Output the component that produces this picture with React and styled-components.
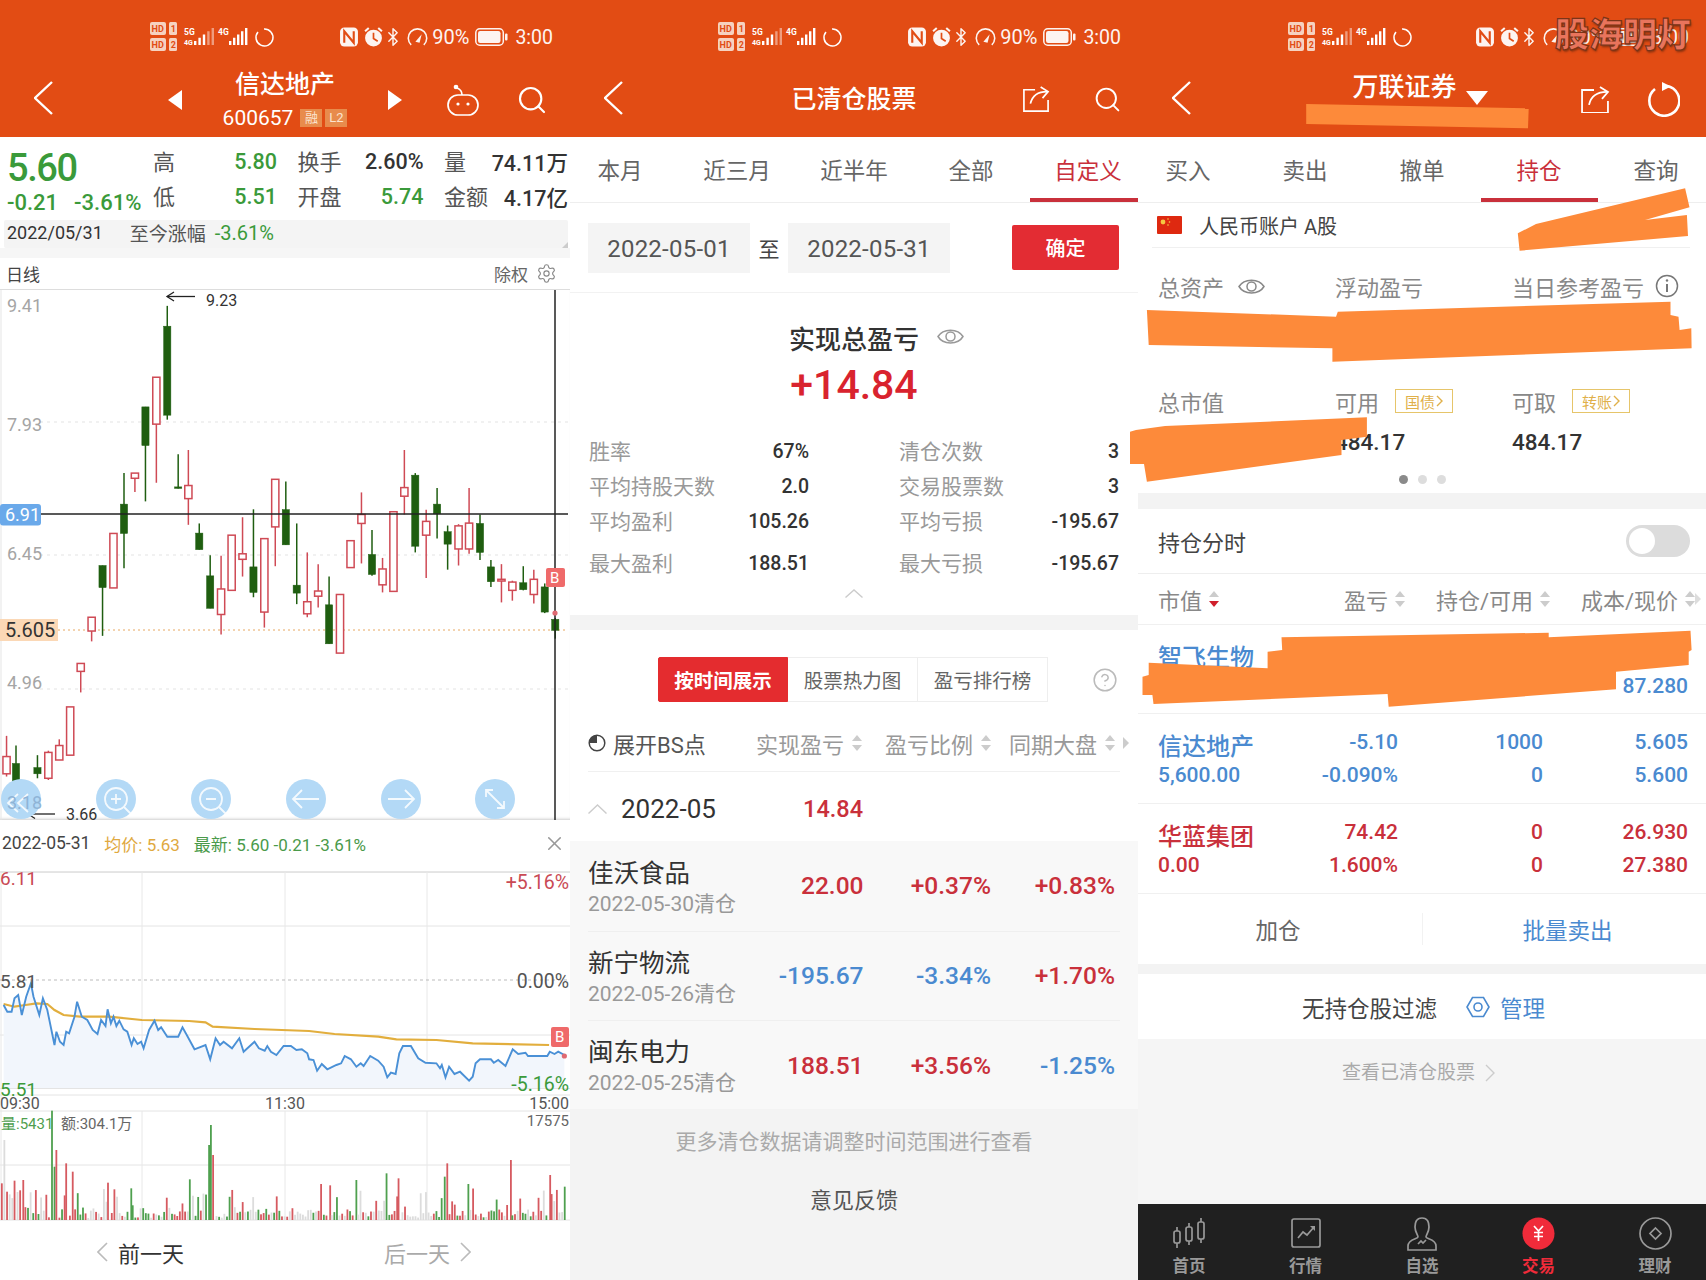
import React from 'react';
import styled, { createGlobalStyle } from 'styled-components';
import { Search, Settings, Bluetooth, CircleHelp, X } from 'lucide-react';

const ORANGE = '#e24c14';
const RED = '#c9303b';
const BLUE = '#4a8ad0';
const GREEN = '#3a9a3a';
const SCRIBBLE = '#fd8a3a';

const Global = createGlobalStyle`
  html, body { margin: 0; padding: 0; background: #fff; }
  * { box-sizing: border-box; }
  body { font-family: Roboto, "Noto Sans CJK SC", sans-serif; color: #333; }
`;

const Page = styled.div`
  display: grid;
  grid-template-columns: 570px 568px 568px;
  width: 1706px;
  height: 1280px;
  overflow: hidden;
`;
const Panel = styled.section`
  position: relative;
  display: flex;
  flex-direction: column;
  height: 1280px;
  background: ${p => p.$bg || '#fff'};
`;
const Header = styled.header`
  height: 137px;
  flex: none;
  background: ${ORANGE};
  color: #fff;
  display: flex;
  flex-direction: column;
`;
const Status = styled.div`
  height: 66px;
  padding: 21px 17px 0 ${p => p.$left}px;
  display: flex;
  justify-content: space-between;
  align-items: flex-start;
`;
const StatusRight = styled.div`
  display: flex;
  align-items: center;
  height: 32px;
  gap: 6px;
  font-size: 20px;
  opacity: .94;
`;
const BtIcon = styled(Bluetooth)`
  margin: 0 -1.5px 0 -6.5px;
`;
const GaugeSvg = styled.svg`
  margin-right: -2px;
`;
const Time = styled.span`
  margin-left: 1px;
  font-size: 19.5px;
`;
const Nav = styled.div`
  flex: 1;
  display: grid;
  grid-template-columns: 1fr auto 1fr;
  align-items: center;
  padding-bottom: 4px;
`;
const NavLeft = styled.div`
  display: flex;
  padding-left: 34px;
  margin-top: -3px;
`;
const NavRight = styled.div`
  display: flex;
  justify-content: flex-end;
  align-items: center;
  gap: ${p => p.$gap}px;
  padding-right: ${p => p.$pad}px;
`;
const TitleBlock = styled.div`
  display: flex;
  align-items: center;
  gap: 41px;
`;
const TitleStack = styled.div`
  display: flex;
  flex-direction: column;
  align-items: center;
  padding-bottom: ${p => p.$pb || 0}px;
  padding-right: ${p => p.$pr || 0}px;
`;
const Title = styled.div`
  font-size: 25px;
  line-height: 34px;
  font-weight: 500;
  white-space: nowrap;
`;
const TradeTitle = styled(Title)`
  font-size: 26px;
`;
const CodeLine = styled.div`
  display: flex;
  align-items: center;
  gap: 3px;
  margin-top: 2px;
  font-size: 21px;
  line-height: 28px;
`;
const Badge = styled.span`
  width: 22px;
  height: 18px;
  margin-left: ${p => p.$ml || 0}px;
  background: #e88b4c;
  color: #fbe3cf;
  font-size: 13px;
  line-height: 18px;
  text-align: center;
`;
const TitleCaret = styled.span`
  display: block;
  margin: 22px 0 0 9px;
  width: 0;
  height: 0;
  border-left: 11px solid transparent;
  border-right: 11px solid transparent;
  border-top: 14px solid #fff;
`;
const TitleRow = styled.div`
  display: flex;
  align-items: center;
`;

/* Panel one */
const Quote = styled.div`
  height: 83px;
  flex: none;
  display: flex;
`;
const PriceCol = styled.div`
  width: 153px;
  padding: 8px 0 0 7px;
`;
const Price = styled.div`
  font-size: 38px;
  line-height: 46px;
  font-weight: 500;
  color: ${GREEN};
  letter-spacing: -1.4px;
`;
const Changes = styled.div`
  display: flex;
  gap: 16px;
  font-size: 22px;
  line-height: 24px;
  color: ${GREEN};
  white-space: nowrap;
  font-weight: 500;
`;
const QuoteGrid = styled.div`
  display: grid;
  grid-template-columns: 124px 126px 124px;
  grid-auto-rows: 35px;
  column-gap: 20.5px;
  padding-top: 5px;
`;
const QuoteCell = styled.div`
  display: flex;
  justify-content: space-between;
  align-items: center;
  white-space: nowrap;
`;
const QuoteKey = styled.span`
  font-size: 22px;
  color: #555;
`;
const QuoteVal = styled.span`
  margin-top: 3px;
  font-size: 21.5px;
  font-weight: 500;
  color: ${p => (p.$green ? GREEN : '#333')};
`;
const DateBar = styled.div`
  position: relative;
  height: 28px;
  flex: none;
  margin: 0 2px 0 4px;
  background: #f4f4f4;
  display: flex;
  align-items: center;
  padding: 0 0 3px 3px;
  font-size: 18px;
  color: #333;
  white-space: nowrap;
  border-radius: 2px;
  &::after {
    content: '';
    position: absolute;
    right: 0;
    bottom: 0;
    border-left: 6px solid transparent;
    border-bottom: 6px solid #ccc;
  }
`;
const DateKey = styled.span`
  margin-left: 27px;
  font-size: 19px;
  color: #555;
`;
const DateGreen = styled.span`
  margin-left: 9px;
  font-size: 20px;
  color: ${GREEN};
`;
const ChartHead = styled.div`
  height: 32px;
  flex: none;
  border-bottom: 1px solid #ddd;
  display: flex;
  align-items: center;
  justify-content: space-between;
  padding: 0 13px 0 6px;
  font-size: 17px;
  color: #444;
`;
const ChartHeadRight = styled.div`
  display: flex;
  align-items: center;
  gap: 8px;
  color: #666;
`;
const ChartSvg = styled.svg`
  display: block;
  flex: none;
  overflow: visible;
`;
const KlineWrap = styled.div`
  flex: none;
  height: 530px;
  box-shadow: inset 0 -3px 3px -2px #ccc;
`;
const DetailHead = styled.div`
  position: relative;
  height: 52px;
  flex: none;
  display: flex;
  align-items: center;
  padding: 0 4px 5px 2px;
  font-size: 17px;
  white-space: nowrap;
  background: #fff;
  border-bottom: 1px solid #e6e6e6;
`;
const DetailDate = styled.span`
  font-size: 17.5px;
  color: #444;
`;
const DetailAvg = styled.span`
  margin-left: 14px;
  color: #e0a93f;
`;
const DetailNew = styled.span`
  margin-left: 14px;
  color: #4a9a4a;
`;
const DetailClose = styled.span`
  margin-left: auto;
  display: flex;
  color: #999;
`;
const DayFooter = styled.div`
  flex: 1;
  display: flex;
  align-items: center;
  padding: 2px 0 0 97px;
  font-size: 22px;
  color: #333;
`;
const DayLink = styled.span`
  display: flex;
  align-items: center;
  gap: 10px;
  color: ${p => (p.$muted ? '#aaa' : '#333')};
  margin-left: ${p => p.$ml || 0}px;
`;

const AxisText = styled.text`
  font-family: Roboto, sans-serif;
  font-size: ${p => p.$size || 18}px;
  fill: ${p => p.$fill || '#a5a5a5'};
  font-weight: ${p => p.$weight || 400};
`;
const CjkText = styled.text`
  font-family: Roboto, "Noto Sans CJK SC", sans-serif;
  font-size: 15px;
  fill: ${p => p.$fill || '#777'};
`;

/* Tabs */
const Tabs = styled.div`
  height: 66px;
  flex: none;
  display: grid;
  grid-template-columns: repeat(5, 117px);
  justify-content: center;
  overflow: hidden;
  border-bottom: 1px solid #eee;
`;
const Tab = styled.div`
  display: flex;
  align-items: center;
  justify-content: center;
  font-size: 22.5px;
  padding-top: 2px;
  color: ${p => (p.$on ? RED : '#666')};
  border-bottom: 4px solid ${p => (p.$on ? RED : 'transparent')};
`;

/* Panel two */
const DateRow = styled.div`
  height: 90px;
  flex: none;
  display: flex;
  align-items: center;
  padding: 0 19px 0 18px;
  border-bottom: 1px solid #f2f2f2;
`;
const DateInput = styled.div`
  width: 162px;
  height: 50px;
  padding-top: 3px;
  background: #f4f4f4;
  color: #555;
  font-size: 24px;
  letter-spacing: .25px;
  display: flex;
  align-items: center;
  justify-content: center;
`;
const DateTo = styled.span`
  width: 38px;
  text-align: center;
  font-size: 21px;
  color: #444;
`;
const Confirm = styled.div`
  margin-left: auto;
  width: 107px;
  height: 45px;
  background: #e32c33;
  color: #fff;
  border-radius: 2px;
  font-size: 20px;
  font-weight: 500;
  display: flex;
  align-items: center;
  justify-content: center;
`;
const Summary = styled.div`
  height: 322px;
  flex: none;
  padding-top: 29px;
`;
const SummaryTitle = styled.div`
  position: relative;
  height: 30px;
  display: flex;
  justify-content: center;
  align-items: center;
  font-size: 26px;
  font-weight: 500;
  color: #333;
`;
const EyeSlot = styled.span`
  position: absolute;
  left: 367px;
  top: 5px;
  display: flex;
`;
const BigNumber = styled.div`
  height: 64px;
  line-height: 66px;
  text-align: center;
  font-size: 41px;
  font-weight: 500;
  color: #d9232e;
`;
const Stats = styled.div`
  margin-top: 16px;
  display: grid;
  grid-template-columns: 220px 220px;
  grid-template-rows: 35px 35px 35px 49px;
  column-gap: 90px;
  padding-left: 19px;
`;
const Stat = styled.div`
  display: flex;
  justify-content: space-between;
  align-items: center;
`;
const StatKey = styled.span`
  font-size: 21px;
  color: #999;
`;
const StatVal = styled.span`
  margin-top: 3px;
  font-size: 19.5px;
  font-weight: 500;
  color: #333;
`;
const CollapseRow = styled.div`
  display: flex;
  justify-content: center;
  padding-top: 3px;
`;
const Band = styled.div`
  height: ${p => p.$h}px;
  flex: none;
  background: ${p => p.$color || '#f3f3f3'};
`;
const SegRow = styled.div`
  flex: none;
  display: flex;
  align-items: center;
  height: 45px;
  margin-top: 27px;
  padding-left: 88px;
`;
const Seg = styled.div`
  width: 130px;
  height: 45px;
  display: flex;
  align-items: center;
  justify-content: center;
  font-size: 19.5px;
  background: ${p => (p.$on ? '#e42c2f' : '#fff')};
  color: ${p => (p.$on ? '#fff' : '#666')};
  font-weight: ${p => (p.$on ? 700 : 400)};
  border: 1px solid ${p => (p.$on ? '#e42c2f' : '#eee')};
  border-left-width: ${p => (p.$on ? 1 : 0)}px;
  border-radius: ${p => (p.$on ? '2px 0 0 2px' : 0)};
`;
const HelpSlot = styled.span`
  margin-left: 44px;
  display: flex;
  color: #bbb;
`;
const ClearHead = styled.div`
  height: 54px;
  margin: 16px 18px 0;
  padding-bottom: 4px;
  flex: none;
  display: grid;
  grid-template-columns: 158px 116px 129px 124px;
  align-items: center;
  border-bottom: 1px solid #f0f0f0;
  white-space: nowrap;
`;
const BSLabel = styled.div`
  display: flex;
  align-items: center;
  gap: 7px;
  font-size: 22px;
  color: #555;
`;
const HeadCell = styled.div`
  display: flex;
  justify-content: flex-end;
  align-items: center;
  gap: 8px;
  font-size: 22px;
  color: #999;
`;
const MoreArrow = styled.span`
  width: 0;
  height: 0;
  margin: 0 -14px 0 0;
  border-top: 6px solid transparent;
  border-bottom: 6px solid transparent;
  border-left: 6px solid #ccc;
`;
const HoldArrow = styled(MoreArrow)`
  margin: 0 -13px 0 0;
  border-left-color: #ddd;
`;
const MonthRow = styled.div`
  height: 69px;
  flex: none;
  margin: 0 18px;
  padding-top: 4px;
  display: grid;
  grid-template-columns: 159px 116px;
  align-items: center;
`;
const MonthLabel = styled.div`
  display: flex;
  align-items: center;
  gap: 14px;
  font-size: 26px;
  color: #333;
`;
const MonthVal = styled.div`
  text-align: right;
  font-size: 23.5px;
  font-weight: 500;
  color: ${RED};
`;
const ClearList = styled.div`
  flex: none;
  height: 268px;
  background: #f8f8f8;
  padding: 0 18px;
`;
const ClearRow = styled.div`
  height: 89.5px;
  display: grid;
  grid-template-columns: 159.5px 116px 127.5px 124px;
  align-items: center;
  border-top: ${p => (p.$first ? 'none' : '1px solid #efefef')};
  white-space: nowrap;
`;
const ClearName = styled.div`
  margin-top: 2px;
  font-size: 25.5px;
  line-height: 34px;
  color: #333;
`;
const ClearDate = styled.div`
  font-size: 21px;
  line-height: 28px;
  color: #999;
`;
const ClearVal = styled.div`
  text-align: right;
  font-size: 24.5px;
  font-weight: 500;
  color: ${p => (p.$down ? BLUE : RED)};
`;
const ClearFoot = styled.div`
  flex: 1;
  background: #f3f3f3;
  padding-top: 18px;
  text-align: center;
`;
const Hint = styled.div`
  font-size: 21px;
  line-height: 30px;
  color: #aaa;
`;
const Feedback = styled.div`
  margin-top: 29px;
  font-size: 22px;
  line-height: 30px;
  color: #555;
`;

/* Panel three */
const Account = styled.div`
  height: 45px;
  margin: 0 16px 0 14px;
  flex: none;
  display: flex;
  align-items: center;
  gap: 17px;
  padding-left: 5px;
  border-bottom: 1px solid #f0f0f0;
  font-size: 20px;
  color: #444;
`;
const Metrics = styled.div`
  height: 245px;
  flex: none;
  padding: 23px 0 0 20px;
  display: grid;
  grid-template-columns: repeat(3, 177px);
  grid-template-rows: 30px 85px 30px 52px;
`;
const MetricKey = styled.div`
  display: flex;
  align-items: center;
  font-size: 22px;
  color: #888;
  white-space: nowrap;
  gap: ${p => p.$gap || 14}px;
`;
const MetricVal = styled.div`
  font-size: 22.5px;
  font-weight: 500;
  color: #333;
  display: flex;
  align-items: center;
`;
const MiniTag = styled.span`
  width: 58px;
  height: 24px;
  margin-left: 2px;
  border: 1px solid #e6c56a;
  color: #e0b04a;
  font-size: 15px;
  display: flex;
  align-items: center;
  justify-content: center;
  gap: 1px;
`;
const Dots = styled.div`
  position: absolute;
  left: 261px;
  top: 475px;
  display: flex;
  gap: 10px;
`;
const Dot = styled.span`
  width: 9px;
  height: 9px;
  border-radius: 50%;
  background: ${p => (p.$on ? '#8a8a8a' : '#ddd')};
`;
const ToggleRow = styled.div`
  height: 65px;
  flex: none;
  display: flex;
  align-items: center;
  justify-content: space-between;
  padding: 0 16px 0 20px;
  font-size: 22px;
  color: #444;
  border-bottom: 1px solid #eee;
`;
const ToggleTrack = styled.span`
  display: block;
  width: 64px;
  height: 32px;
  border-radius: 16px;
  background: #dcdcdc;
  padding: 3px;
`;
const ToggleKnob = styled.span`
  display: block;
  width: 26px;
  height: 26px;
  border-radius: 50%;
  background: #fff;
`;
const HoldGrid = styled.div`
  display: grid;
  grid-template-columns: 110px 130px 145px 145px;
  padding-left: 20px;
  height: ${p => p.$h}px;
  flex: none;
  border-bottom: 1px solid #f0f0f0;
`;
const HoldHead = styled.div`
  display: flex;
  align-items: center;
  justify-content: ${p => (p.$left ? 'flex-start' : 'flex-end')};
  gap: 7px;
  white-space: nowrap;
  font-size: 22px;
  color: #888;
  > svg { margin-right: ${p => (p.$left ? 0 : -7)}px; }
`;
const HoldCell = styled.div`
  padding-top: 12px;
  text-align: ${p => (p.$left ? 'left' : 'right')};
  color: ${p => (p.$red ? RED : BLUE)};
  white-space: nowrap;
`;
const HoldName = styled.div`
  margin-top: 5px;
  font-size: 24px;
  line-height: 33px;
  font-weight: 500;
`;
const HoldLine = styled.div`
  font-size: 21px;
  font-weight: 500;
  line-height: ${p => p.$lh || 33}px;
  height: ${p => p.$lh || 33}px;
`;
const Actions = styled.div`
  height: 70px;
  flex: none;
  display: grid;
  grid-template-columns: 284px 284px;
  align-items: center;
`;
const Action = styled.div`
  text-align: center;
  font-size: 22.5px;
  color: ${p => (p.$blue ? BLUE : '#666')};
  border-left: ${p => (p.$blue ? '1px solid #f2f2f2' : 'none')};
  margin-left: ${p => (p.$blue ? 0 : -4)}px;
  padding-left: ${p => (p.$blue ? 6 : 0)}px;
`;
const FilterRow = styled.div`
  height: 65px;
  flex: none;
  display: flex;
  align-items: center;
  padding-left: 164px;
  font-size: 22.5px;
  color: #444;
`;
const ManageLink = styled.span`
  margin-left: 29px;
  display: flex;
  align-items: center;
  gap: 10px;
  color: ${BLUE};
`;
const ClosedLink = styled.div`
  flex: 1;
  background: #f5f5f5;
  display: flex;
  align-items: flex-start;
  padding: 20px 0 0 204px;
  gap: 10px;
  font-size: 19px;
  line-height: 28px;
  color: #aaa;
`;
const ChevSlot = styled.span`
  display: flex;
  align-items: center;
  height: 28px;
`;
const BottomNav = styled.nav`
  height: 76px;
  flex: none;
  background: #202020;
  display: grid;
  grid-template-columns: repeat(5, 116.5px);
  justify-content: center;
`;
const NavItem = styled.div`
  display: flex;
  flex-direction: column;
  align-items: center;
  padding-top: 13px;
  font-size: 16.5px;
  line-height: 24px;
  font-weight: 700;
  color: ${p => (p.$on ? '#f02b3a' : '#999')};
`;
const NavIcon = styled.span`
  display: flex;
  height: 36px;
  margin-bottom: 2px;
`;
const Watermark = styled.div`
  position: absolute;
  left: 417px;
  top: 14px;
  font-size: 34px;
  line-height: 42px;
  font-weight: 900;
  white-space: nowrap;
  color: #e9745c;
  -webkit-text-stroke: 1.2px #7a3418;
  text-shadow: 1px 2px 2px rgba(70, 30, 10, .5);
`;
const ScribbleLayer = styled.svg`
  position: absolute;
  left: -8px;
  top: 0;
  pointer-events: none;
`;

/* Drawn icons */
const Chevron = ({ dir = 'left', size = 34, w = 19, color = '#fff', sw = 2.4 }) => {
  const pts = { left: `${w - 1},1 1,${size / 2} ${w - 1},${size - 1}`, right: `1,1 ${w - 1},${size / 2} 1,${size - 1}` };
  return (
    <svg width={w} height={size} viewBox={`0 0 ${w} ${size}`}>
      <polyline points={pts[dir]} fill="none" stroke={color} strokeWidth={sw} />
    </svg>
  );
};
const ChevronUp = ({ w = 18, h = 9, color = '#ccc' }) => (
  <svg width={w} height={h} viewBox={`0 0 ${w} ${h}`}>
    <polyline points={`0.5,${h - 0.5} ${w / 2},1 ${w - 0.5},${h - 0.5}`} fill="none" stroke={color} strokeWidth="1.4" />
  </svg>
);
const Tri = ({ dir }) => (
  <svg width="14" height="20" viewBox="0 0 14 20">
    <polygon points={dir === 'left' ? '14,0 14,20 0,10' : '0,0 0,20 14,10'} fill="#fff" />
  </svg>
);
const Robot = () => (
  <svg width="32" height="32" viewBox="0 0 32 32" fill="none" stroke="#fff" strokeWidth="1.7">
    <rect x="1" y="11" width="30" height="20" rx="10" />
    <path d="M15 11 C15 7 13 5 10 4" />
    <circle cx="9" cy="3" r="1.5" fill="#fff" />
    <circle cx="11" cy="20" r="1.6" fill="#fff" stroke="none" />
    <circle cx="21" cy="20" r="1.6" fill="#fff" stroke="none" />
  </svg>
);
const Share = ({ w = 30 }) => (
  <svg width={w} height={w * 0.93} viewBox="0 0 30 28" fill="none" stroke="#fff" strokeWidth="1.8">
    <path d="M14 4 H2 V27 H28 V15" />
    <path d="M9 19 C11 10 18 6 27 6" />
    <polyline points="20,1 28,6 22,13" />
  </svg>
);
const Refresh = () => (
  <svg width="33" height="35" viewBox="0 0 33 35" fill="none" stroke="#fff" strokeWidth="2.6">
    <path d="M20 4 A 15 15 0 1 1 8 7" />
    <polygon points="15,0 24,4.5 15,9" fill="#fff" stroke="none" />
  </svg>
);
const Eye = ({ color = '#999' }) => (
  <svg width="27" height="19" viewBox="0 0 27 19" fill="none" stroke={color} strokeWidth="1.5">
    <path d="M1 9.5 C6 1 21 1 26 9.5 C21 18 6 18 1 9.5 Z" />
    <circle cx="13.5" cy="9.5" r="4.5" />
  </svg>
);
const InfoIcon = () => (
  <svg width="24" height="24" viewBox="0 0 24 24" fill="none" stroke="#777" strokeWidth="1.5">
    <circle cx="12" cy="12" r="10.5" />
    <line x1="12" y1="10" x2="12" y2="18" strokeWidth="2" />
    <circle cx="12" cy="6.5" r="1.2" fill="#777" stroke="none" />
  </svg>
);
const Pie = () => (
  <svg width="18" height="18" viewBox="0 0 18 18">
    <circle cx="9" cy="9" r="7.8" fill="none" stroke="#444" strokeWidth="1.5" />
    <path d="M9 9 V1.2 A7.8 7.8 0 0 0 1.2 9 Z" fill="#444" />
  </svg>
);
const Sort = ({ active }) => (
  <svg width="10" height="18" viewBox="0 0 10 18">
    <polygon points="5,1 10,7 0,7" fill="#ccc" />
    <polygon points="5,17 10,11 0,11" fill={active ? '#d0202c' : '#ccc'} />
  </svg>
);
const Flag = () => (
  <svg width="25" height="18" viewBox="0 0 25 18">
    <rect width="25" height="18" rx="1" fill="#de2910" />
    <circle cx="6" cy="6" r="2.4" fill="#f5c842" />
    <circle cx="11" cy="3" r=".8" fill="#f5c842" />
    <circle cx="12.5" cy="6" r=".8" fill="#f5c842" />
    <circle cx="11" cy="9" r=".8" fill="#f5c842" />
  </svg>
);
const Hex = () => (
  <svg width="24" height="24" viewBox="0 0 24 24" fill="none" stroke={BLUE} strokeWidth="1.6">
    <polygon points="6.5,2.5 17.5,2.5 23,12 17.5,21.5 6.5,21.5 1,12" />
    <circle cx="12" cy="12" r="4" />
  </svg>
);
const Signals = () => {
  const bars = (x0, n, step, fade) =>
    Array.from({ length: n }, (_, i) => {
      const h = 4 + i * (13 / (n - 1));
      return <rect key={i} x={x0 + i * step} y={24 - h} width="2.4" height={h} fill="#fff" opacity={fade && i > n - 3 ? 0.45 : 1} />;
    });
  return (
    <svg width="125" height="34" viewBox="0 0 125 34">
      {[1, 17].map((y, i) => (
        <g key={y}>
          <rect x="0" y={y} width="16" height="13" rx="2" fill="#f6d2c0" />
          <AxisText x="1.6" y={y + 10} $size={9} $weight={700} $fill={ORANGE}>HD</AxisText>
          <rect x="19" y={y} width="8" height="13" rx="1.5" fill="#f6d2c0" />
          <AxisText x="20.7" y={y + 10} $size={9} $weight={700} $fill={ORANGE}>{i + 1}</AxisText>
        </g>
      ))}
      <AxisText x="34" y="14" $size={8.5} $weight={700} $fill="#fff">5G</AxisText>
      <AxisText x="34" y="24" $size={7} $weight={700} $fill="#fff">4G</AxisText>
      {bars(44, 5, 4.4, true)}
      <AxisText x="68" y="14" $size={8.5} $weight={700} $fill="#fff">4G</AxisText>
      {bars(79, 5, 4, false)}
      <path d="M114 8 A8.5 8.5 0 1 1 108 11" fill="none" stroke="#fff" strokeWidth="1.5" />
    </svg>
  );
};
const NfcIcon = () => (
  <svg width="18" height="20" viewBox="0 0 17 19">
    <rect x="0" y="0.5" width="17" height="18" rx="4" fill="#fff" />
    <path d="M4 15 V4 L13 15 V4" fill="none" stroke={ORANGE} strokeWidth="2" />
  </svg>
);
const AlarmIcon = () => (
  <svg width="19" height="20" viewBox="0 0 18 19">
    <circle cx="9" cy="10.5" r="8" fill="#fff" />
    <path d="M9 5.5 V11 L13 13.5" fill="none" stroke={ORANGE} strokeWidth="1.6" />
    <path d="M1 4 L4.5 1 M17 4 L13.5 1" stroke="#fff" strokeWidth="2" />
  </svg>
);
const GaugeIcon = () => (
  <GaugeSvg width="21" height="20" viewBox="0 0 20 19" fill="none" stroke="#fff" strokeWidth="1.5">
    <path d="M4 17 A8.8 8.8 0 1 1 16 17" />
    <path d="M8 14 L14 7 L12 15 Z" fill="#fff" stroke="none" />
  </GaugeSvg>
);
const Battery = () => (
  <svg width="33" height="18" viewBox="0 0 33 18">
    <rect x="0.8" y="0.8" width="27.5" height="16.4" rx="4" fill="none" stroke="#fff" strokeWidth="1.5" />
    <rect x="3" y="3" width="22.5" height="12" rx="2.2" fill="#fff" />
    <rect x="30" y="5.5" width="2.5" height="7" rx="1" fill="#fff" />
  </svg>
);
const StatusBar = ({ left }) => (
  <Status $left={left}>
    <Signals />
    <StatusRight>
      <NfcIcon />
      <AlarmIcon />
      <BtIcon size={20} strokeWidth={1.7} />
      <GaugeIcon />
      <span>90%</span>
      <Battery />
      <Time>3:00</Time>
    </StatusRight>
  </Status>
);

/* Day K-line chart: data read off the picture, mapped to page pixels */
const kx = z => z / 2.75;
const ky = z => 280 + z / 2.9;
const CANDLES = [
  ['r', 18, 1322, 1440, 1382, 1432], ['g', 44, 1350, 1490, 1402, 1475], ['g', 103, 1378, 1445, 1414, 1432],
  ['r', 133, 1365, 1450, 1370, 1445], ['r', 163, 1332, 1392, 1350, 1392], ['r', 193, 1238, 1378, 1238, 1378],
  ['r', 222, 1112, 1196, 1112, 1135], ['r', 252, 978, 1048, 978, 1018], ['g', 282, 828, 1032, 828, 892],
  ['r', 312, 735, 893, 735, 893], ['g', 341, 560, 836, 650, 735], ['r', 371, 560, 615, 560, 575],
  ['g', 400, 368, 642, 368, 480], ['r', 430, 282, 588, 282, 418], ['g', 460, 75, 405, 134, 392],
  ['g', 490, 505, 605, 600, 604], ['r', 518, 493, 710, 596, 634], ['g', 548, 706, 782, 734, 782],
  ['g', 578, 798, 952, 858, 952], ['r', 608, 800, 1028, 896, 970], ['r', 637, 740, 900, 740, 900],
  ['r', 667, 688, 860, 794, 810], ['g', 697, 665, 920, 832, 906], ['r', 727, 750, 1008, 750, 963],
  ['r', 757, 578, 830, 578, 716], ['g', 786, 584, 768, 666, 768], ['g', 816, 706, 940, 885, 908],
  ['r', 845, 790, 978, 933, 968], ['r', 875, 824, 950, 902, 917], ['g', 905, 860, 1055, 942, 1055],
  ['r', 935, 912, 1082, 912, 1082], ['r', 964, 756, 834, 756, 834], ['r', 994, 616, 822, 680, 706],
  ['g', 1023, 725, 858, 796, 854], ['r', 1052, 806, 906, 838, 884], ['r', 1082, 672, 903, 672, 903],
  ['r', 1112, 493, 680, 602, 627], ['g', 1142, 560, 790, 566, 772], ['r', 1172, 666, 864, 700, 740],
  ['g', 1202, 603, 750, 650, 678], ['g', 1231, 712, 840, 730, 766], ['r', 1261, 708, 828, 713, 780],
  ['r', 1290, 603, 794, 705, 780], ['g', 1320, 680, 812, 706, 790], ['g', 1350, 812, 890, 832, 875],
  ['r', 1379, 824, 935, 868, 873], ['r', 1409, 872, 930, 876, 900], ['g', 1439, 830, 900, 878, 898],
  ['r', 1468, 840, 938, 868, 912], ['g', 1498, 880, 966, 890, 963], ['g', 1527, 980, 1040, 984, 1016],
];
const KRED = '#cf4a55';
const KGREEN = '#1f5e10';
const RoundButton = ({ cx, children }) => (
  <g transform={`translate(${cx} 799)`}>
    <circle r="20" fill="#b3d9f6" />
    <g fill="none" stroke="#fff" strokeWidth="1.8" opacity=".85">{children}</g>
  </g>
);
const KlineChart = () => (
  <KlineWrap>
    <ChartSvg width="570" height="530" viewBox="0 290 570 530">
      {[422, 555, 689].map(y => (
        <line key={y} x1="40" x2="568" y1={y} y2={y} stroke="#e3e3e3" strokeDasharray="3 4" />
      ))}
      <line x1="1" x2="1" y1="290" y2="820" stroke="#e6e6e6" />
      <line x1="58" x2="568" y1="630" y2="630" stroke="#e8a860" strokeDasharray="2 3" />
      {CANDLES.map(([t, x, wt, wb, bt, bb]) => {
        const c = t === 'r' ? KRED : KGREEN;
        return (
          <g key={x}>
            <line x1={kx(x)} x2={kx(x)} y1={ky(wt)} y2={ky(wb)} stroke={c} strokeWidth="1.5" />
            <rect
              x={kx(x) - 3.6}
              y={ky(bt)}
              width="7.2"
              height={Math.max(ky(bb) - ky(bt), 1.5)}
              fill={t === 'r' ? '#fff' : c}
              stroke={c}
              strokeWidth={t === 'r' ? 1.5 : 0.5}
            />
          </g>
        );
      })}
      <line x1="38" x2="568" y1="514" y2="514" stroke="#222" strokeWidth="1.5" />
      <line x1="555" x2="555" y1="290" y2="820" stroke="#222" strokeWidth="1.5" />
      <AxisText x="7" y="312" >9.41</AxisText>
      <AxisText x="7" y="431">7.93</AxisText>
      <AxisText x="7" y="560">6.45</AxisText>
      <AxisText x="7" y="689">4.96</AxisText>
      <rect x="0" y="504" width="41" height="21.5" rx="3" fill="#6aa9ea" />
      <AxisText x="5" y="521" $fill="#fff">6.91</AxisText>
      <rect x="0" y="619" width="58" height="22" fill="#fbd8b6" />
      <AxisText x="5" y="637" $size={20} $fill="#333">5.605</AxisText>
      <g stroke="#222" strokeWidth="1.3" fill="none">
        <path d="M167 296.5 H195" />
        <path d="M174 292 L167 296.5 L174 301" />
        <path d="M28 814 H55" />
        <path d="M35 809.5 L28 814 L35 818.5" />
      </g>
      <AxisText x="206" y="306" $size={16} $fill="#333">9.23</AxisText>
      <rect x="546" y="568" width="19" height="19" rx="2" fill="#ef6a6a" />
      <AxisText x="550" y="583" $size={15} $fill="#fff">B</AxisText>
      <circle cx="555" cy="613" r="2.6" fill="#e06a72" />
      <RoundButton cx={21}>
        <path d="M13 -9 L3 0 L13 9 M3 -9 L-7 0 L3 9" transform="translate(-6 4)" />
      </RoundButton>
      <RoundButton cx={116}>
        <circle r="11" />
        <path d="M8 8 L15 15 M-5 0 H5 M0 -5 V5" />
      </RoundButton>
      <RoundButton cx={211}>
        <circle r="11" />
        <path d="M8 8 L15 15 M-5 0 H5" />
      </RoundButton>
      <RoundButton cx={306}>
        <path d="M-13 0 H13 M-4 -9 L-13 0 L-4 9" />
      </RoundButton>
      <RoundButton cx={401}>
        <path d="M-13 0 H13 M4 -9 L13 0 L4 9" />
      </RoundButton>
      <RoundButton cx={495}>
        <path d="M-9 -9 L9 9 M-9 -2 V-9 H-2 M9 2 V9 H2" />
      </RoundButton>
      <AxisText x="7" y="809" $fill="#8fb4d6">3.18</AxisText>
      <AxisText x="66" y="820" $size={16} $fill="#333">3.66</AxisText>
    </ChartSvg>
  </KlineWrap>
);

/* Intraday chart */
const ix = z => z / 2.75;
const iy = z => 820 + z / 3;
const BLUE_LINE = [[10,555],[20,575],[32,575],[40,535],[50,525],[60,585],[72,530],[85,490],[92,530],[108,585],[118,535],[130,570],[150,675],[155,635],[165,665],[175,675],[182,635],[190,640],[205,590],[212,545],[225,590],[240,600],[255,630],[268,642],[278,600],[290,618],[296,568],[305,610],[312,590],[320,618],[328,602],[340,628],[350,635],[362,675],[368,655],[378,672],[388,665],[395,685],[410,630],[425,602],[435,630],[443,622],[460,650],[490,650],[502,622],[515,648],[535,688],[565,675],[578,718],[593,655],[605,675],[615,665],[638,685],[658,655],[670,695],[700,665],[712,685],[728,692],[735,678],[745,695],[760,705],[780,678],[800,678],[815,690],[830,688],[845,700],[850,718],[862,720],[872,752],[885,732],[900,748],[925,735],[938,730],[948,708],[965,718],[980,740],[992,730],[1000,738],[1018,708],[1040,722],[1055,740],[1065,772],[1075,758],[1088,762],[1098,700],[1108,678],[1130,678],[1150,715],[1170,728],[1200,730],[1210,745],[1215,735],[1225,772],[1235,740],[1250,762],[1265,755],[1290,782],[1300,770],[1308,730],[1320,718],[1350,718],[1358,728],[1370,720],[1390,738],[1410,688],[1425,702],[1445,698],[1452,708],[1505,708],[1512,695],[1525,702],[1535,695],[1552,705]];
const AVG_LINE = [[10,552],[40,560],[70,555],[100,550],[130,552],[150,570],[175,585],[220,590],[300,590],[390,600],[520,603],[565,607],[585,620],[700,627],[850,633],[920,642],[1040,650],[1090,658],[1200,660],[1300,670],[1510,675]];
const toPts = arr => arr.map(([x, y]) => `${ix(x).toFixed(1)},${iy(y).toFixed(1)}`).join(' ');
const SPIKES = { 143: [872, 'g'], 150: [1040, 'g'], 155: [990, 'r'], 182: [1030, 'r'], 200: [1055, 'r'], 297: [1088, 'r'], 361: [1105, 'g'], 522: [1078, 'g'], 575: [975, 'g'], 580: [915, 'g'], 586: [1005, 'r'], 883: [1092, 'r'], 908: [1096, 'r'], 980: [1080, 'g'], 1063: [1060, 'g'], 1096: [1075, 'r'], 1103: [1040, 'r'], 1223: [1070, 'g'], 1230: [1030, 'r'], 1288: [1092, 'g'], 1405: [1020, 'r'], 1513: [1065, 'r'], 1553: [1100, 'g'], 12: [960, 'w'], 5: [1090, 'r'], 40: [1082, 'r'], 64: [1080, 'r'] };
const VOLUMES = (() => {
  const out = [];
  let seed = 17;
  const rnd = () => { seed = (seed * 16807) % 2147483647; return seed / 2147483647; };
  const taken = Object.keys(SPIKES).map(Number);
  for (let x = 5; x < 1556; x += 7.2) {
    const near = taken.find(t => Math.abs(t - x) < 3.6);
    if (near !== undefined) {
      out.push([near, SPIKES[near][0], SPIKES[near][1]]);
      continue;
    }
    const k = rnd();
    const t = k < 0.35 ? 'r' : k < 0.65 ? 'g' : 'w';
    const r = rnd();
    const dense = x < 230 ? 0.7 : 0.25;
    const h = r < dense ? 30 + rnd() * 65 : 6 + rnd() * 26;
    out.push([x, 1200 - h, t]);
  }
  return out;
})();
const VCOLOR = { r: '#d65a60', g: '#4fa04f', w: '#dcdcdc' };

const IntradayChart = () => (
  <ChartSvg width="570" height="350" viewBox="0 872 570 350">
    {[872.5, 926, 1035, 1088.5, 1095, 1111, 1165, 1220].map(y => (
      <line key={y} x1="0" x2="570" y1={y} y2={y} stroke="#e4e4e4" />
    ))}
    {[142, 285, 427].map(x => (
      <g key={x}>
        <line x1={x} x2={x} y1="872" y2="1088" stroke="#e8e8e8" />
        <line x1={x} x2={x} y1="1111" y2="1220" stroke="#e8e8e8" />
      </g>
    ))}
    <line x1="1" x2="1" y1="872" y2="1220" stroke="#e8e8e8" />
    <line x1="0" x2="570" y1="980" y2="980" stroke="#bbb" strokeDasharray="3 3" />
    <polygon points={`${ix(10)},1088 ${toPts(BLUE_LINE)} ${ix(1552)},1088`} fill="#f2f6fc" />
    <polyline points={toPts(AVG_LINE)} fill="none" stroke="#e2ae3d" strokeWidth="2.2" />
    <polyline points={toPts(BLUE_LINE)} fill="none" stroke="#4a90d6" strokeWidth="1.9" />
    <circle cx={ix(1552)} cy={iy(708)} r="2.6" fill="#e06a72" />
    <rect x="551" y="1027" width="18" height="20" rx="2" fill="#ef6a6a" />
    <AxisText x="555" y="1042" $size={15} $fill="#fff">B</AxisText>
    {VOLUMES.map(([x, top, t], i) => (
      <rect key={i} x={ix(x) - 0.9} y={iy(top)} width="1.8" height={1220 - iy(top)} fill={VCOLOR[t]} />
    ))}
    <AxisText x="0" y="885" $size={19} $fill="#c94a55">6.11</AxisText>
    <AxisText x="569" y="889" $size={19.5} $fill="#c94a55" textAnchor="end">+5.16%</AxisText>
    <AxisText x="0" y="988" $size={19} $fill="#555">5.81</AxisText>
    <AxisText x="569" y="988" $size={19.5} $fill="#555" textAnchor="end">0.00%</AxisText>
    <AxisText x="0" y="1096" $size={19} $fill={GREEN}>5.51</AxisText>
    <AxisText x="569" y="1091" $size={19.5} $fill={GREEN} textAnchor="end">-5.16%</AxisText>
    <AxisText x="0" y="1109" $size={16} $fill="#555">09:30</AxisText>
    <AxisText x="285" y="1109" $size={16} $fill="#555" textAnchor="middle">11:30</AxisText>
    <AxisText x="569" y="1109" $size={16} $fill="#555" textAnchor="end">15:00</AxisText>
    <CjkText x="1" y="1129" $fill="#4f9f4f">量:5431</CjkText>
    <CjkText x="61" y="1129" $fill="#666">额:304.1万</CjkText>
    <AxisText x="569" y="1126" $size={15} $fill="#666" textAnchor="end">17575</AxisText>
  </ChartSvg>
);

/* Panels */
const QUOTE = [
  ['高', '5.80', true], ['换手', '2.60%', false], ['量', '74.11万', false],
  ['低', '5.51', true], ['开盘', '5.74', true], ['金额', '4.17亿', false],
];
const StockPanel = () => (
  <Panel>
    <Header>
      <StatusBar left={150} />
      <Nav>
        <NavLeft><Chevron /></NavLeft>
        <TitleBlock>
          <Tri dir="left" />
          <TitleStack>
            <Title>信达地产</Title>
            <CodeLine>
              600657
              <Badge $ml={4}>融</Badge>
              <Badge>L2</Badge>
            </CodeLine>
          </TitleStack>
          <Tri dir="right" />
        </TitleBlock>
        <NavRight $gap={37} $pad={22}>
          <Robot />
          <Search size={32} strokeWidth={1.6} />
        </NavRight>
      </Nav>
    </Header>
    <Quote>
      <PriceCol>
        <Price>5.60</Price>
        <Changes>
          <span>-0.21</span>
          <span>-3.61%</span>
        </Changes>
      </PriceCol>
      <QuoteGrid>
        {QUOTE.map(([k, v, g]) => (
          <QuoteCell key={k}>
            <QuoteKey>{k}</QuoteKey>
            <QuoteVal $green={g}>{v}</QuoteVal>
          </QuoteCell>
        ))}
      </QuoteGrid>
    </Quote>
    <DateBar>
      2022/05/31
      <DateKey>至今涨幅</DateKey>
      <DateGreen>-3.61%</DateGreen>
    </DateBar>
    <Band $h={10} $color="#f6f6f6" />
    <ChartHead>
      <span>日线</span>
      <ChartHeadRight>
        <span>除权</span>
        <Settings size={21} strokeWidth={1.3} color="#888" />
      </ChartHeadRight>
    </ChartHead>
    <KlineChart />
    <DetailHead>
      <DetailDate>2022-05-31</DetailDate>
      <DetailAvg>均价: 5.63</DetailAvg>
      <DetailNew>最新: 5.60 -0.21 -3.61%</DetailNew>
      <DetailClose><X size={23} strokeWidth={1.6} /></DetailClose>
    </DetailHead>
    <IntradayChart />
    <DayFooter>
      <DayLink>
        <Chevron size={20} w={11} color="#bbb" sw={1.6} />
        前一天
      </DayLink>
      <DayLink $muted $ml={200}>
        后一天
        <Chevron dir="right" size={20} w={11} color="#bbb" sw={1.6} />
      </DayLink>
    </DayFooter>
  </Panel>
);

const STATS = [
  ['胜率', '67%'], ['清仓次数', '3'], ['平均持股天数', '2.0'], ['交易股票数', '3'],
  ['平均盈利', '105.26'], ['平均亏损', '-195.67'], ['最大盈利', '188.51'], ['最大亏损', '-195.67'],
];
const CLEARED = [
  ['佳沃食品', '2022-05-30清仓', '22.00', '+0.37%', '+0.83%'],
  ['新宁物流', '2022-05-26清仓', '-195.67', '-3.34%', '+1.70%'],
  ['闽东电力', '2022-05-25清仓', '188.51', '+3.56%', '-1.25%'],
];
const ClearedPanel = () => (
  <Panel>
    <Header>
      <StatusBar left={148} />
      <Nav>
        <NavLeft><Chevron /></NavLeft>
        <TitleStack><Title>已清仓股票</Title></TitleStack>
        <NavRight $gap={43} $pad={16}>
          <Share w={28} />
          <Search size={29} strokeWidth={1.6} />
        </NavRight>
      </Nav>
    </Header>
    <Tabs>
      {['本月', '近三月', '近半年', '全部', '自定义'].map((t, i) => (
        <Tab key={t} $on={i === 4}>{t}</Tab>
      ))}
    </Tabs>
    <DateRow>
      <DateInput>2022-05-01</DateInput>
      <DateTo>至</DateTo>
      <DateInput>2022-05-31</DateInput>
      <Confirm>确定</Confirm>
    </DateRow>
    <Summary>
      <SummaryTitle>
        实现总盈亏
        <EyeSlot><Eye /></EyeSlot>
      </SummaryTitle>
      <BigNumber>+14.84</BigNumber>
      <Stats>
        {STATS.map(([k, v]) => (
          <Stat key={k}>
            <StatKey>{k}</StatKey>
            <StatVal>{v}</StatVal>
          </Stat>
        ))}
      </Stats>
      <CollapseRow><ChevronUp /></CollapseRow>
    </Summary>
    <Band $h={15} />
    <SegRow>
      <Seg $on>按时间展示</Seg>
      <Seg>股票热力图</Seg>
      <Seg>盈亏排行榜</Seg>
      <HelpSlot><CircleHelp size={26} strokeWidth={1.4} /></HelpSlot>
    </SegRow>
    <ClearHead>
      <BSLabel><Pie />展开BS点</BSLabel>
      <HeadCell>实现盈亏<Sort /></HeadCell>
      <HeadCell>盈亏比例<Sort /></HeadCell>
      <HeadCell>同期大盘<Sort /><MoreArrow /></HeadCell>
    </ClearHead>
    <MonthRow>
      <MonthLabel><ChevronUp w={19} h={10} />2022-05</MonthLabel>
      <MonthVal>14.84</MonthVal>
    </MonthRow>
    <ClearList>
      {CLEARED.map(([n, d, a, b, c], i) => (
        <ClearRow key={n} $first={i === 0}>
          <div>
            <ClearName>{n}</ClearName>
            <ClearDate>{d}</ClearDate>
          </div>
          <ClearVal $down={a[0] === '-'}>{a}</ClearVal>
          <ClearVal $down={b[0] === '-'}>{b}</ClearVal>
          <ClearVal $down={c[0] === '-'}>{c}</ClearVal>
        </ClearRow>
      ))}
    </ClearList>
    <ClearFoot>
      <Hint>更多清仓数据请调整时间范围进行查看</Hint>
      <Feedback>意见反馈</Feedback>
    </ClearFoot>
  </Panel>
);

const HOLDINGS = [
  { name: '信达地产', sub: '5,600.00', a: ['-5.10', '-0.090%'], b: ['1000', '0'], c: ['5.605', '5.600'] },
  { name: '华蓝集团', sub: '0.00', a: ['74.42', '1.600%'], b: ['0', '0'], c: ['26.930', '27.380'], red: true },
];
const Holding = ({ name, sub, a, b, c, red }) => (
  <HoldGrid $h={90}>
    <HoldCell $left $red={red}>
      <HoldName>{name}</HoldName>
      <HoldLine $lh={23}>{sub}</HoldLine>
    </HoldCell>
    {[a, b, c].map((v, i) => (
      <HoldCell key={i} $red={red}>
        <HoldLine>{v[0]}</HoldLine>
        <HoldLine>{v[1]}</HoldLine>
      </HoldCell>
    ))}
  </HoldGrid>
);

const sx = z => 1136 + z / 2.75 - 1130;
const polyA = (arr, oy, f) => arr.map(([x, y]) => `${sx(x).toFixed(1)},${(oy + y / f).toFixed(1)}`).join(' ');
const SCRIBBLES = [
  polyA([[1050,700],[1100,672],[1510,565],[1522,622],[1400,660],[1515,645],[1518,708],[1055,752]], 0, 3),
  polyA([[30,930],[550,950],[555,935],[1470,905],[1470,945],[1492,950],[1495,990],[1527,985],[1528,1045],[540,1085],[540,1045],[35,1035]], 0, 3),
  polyA([[0,1290],[80,1278],[635,1252],[635,1310],[565,1320],[565,1365],[30,1445],[22,1392],[-18,1392],[-18,1296]], 0, 3),
  polyA([[400,352],[1135,338],[1135,352],[1525,332],[1528,390],[1520,395],[1520,435],[1320,455],[1320,508],[695,560],[692,522],[48,552],[45,525],[18,525],[18,470],[35,465],[35,428],[362,445],[362,395],[402,390]], 520, 3),
  polyA([[468,312],[1080,325],[1078,385],[468,372]], 0, 3),
];
const NAVS = [
  ['首页', (
    <svg width="32" height="32" viewBox="0 0 32 32" fill="none" stroke="#999" strokeWidth="1.7">
      <rect x="1" y="14" width="6" height="12" rx="2" /><path d="M4 10 V14 M4 26 V31" />
      <rect x="13" y="10" width="6" height="14" rx="2" /><path d="M16 6 V10 M16 24 V28" />
      <rect x="25" y="5" width="6" height="17" rx="2" /><path d="M28 1 V5 M28 22 V26" />
    </svg>
  )],
  ['行情', (
    <svg width="32" height="32" viewBox="0 0 32 32" fill="none" stroke="#999" strokeWidth="1.7">
      <rect x="2" y="2" width="28" height="28" rx="2" />
      <path d="M8 21 L13 15 L17 18 L24 10" />
      <polygon points="20,9 25,9 25,14" fill="#999" stroke="none" />
    </svg>
  )],
  ['自选', (
    <svg width="30" height="34" viewBox="0 0 30 34" fill="none" stroke="#999" strokeWidth="1.7">
      <path d="M15 1 C9 1 8 6 8 10 C8 15 11 18 11 20 C11 22 1 22 1 29 V33 H29 V29 C29 22 19 22 19 20 C19 18 22 15 22 10 C22 6 21 1 15 1 Z" />
      <path d="M11 27 L14 24 L16 26 L19 23" />
    </svg>
  )],
  ['交易', (
    <svg width="33" height="33" viewBox="0 0 33 33">
      <circle cx="16.5" cy="16.5" r="16" fill="#f02b3a" />
      <path d="M12 9 L16.5 14 L21 9 M16.5 14 V24 M12 15.5 H21 M12 19.5 H21" fill="none" stroke="#fff" strokeWidth="1.7" />
    </svg>
  ), true],
  ['理财', (
    <svg width="33" height="33" viewBox="0 0 33 33" fill="none" stroke="#999" strokeWidth="1.7">
      <circle cx="16.5" cy="16.5" r="15.5" />
      <polygon points="16.5,11 22,16.5 16.5,22 11,16.5" />
    </svg>
  )],
];
const TradePanel = () => (
  <Panel>
    <Header>
      <StatusBar left={150} />
      <Nav>
        <NavLeft><Chevron /></NavLeft>
        <TitleStack $pb={26} $pr={4}>
          <TitleRow>
            <TradeTitle>万联证券</TradeTitle>
            <TitleCaret />
          </TitleRow>
        </TitleStack>
        <NavRight $gap={37} $pad={26}>
          <Share />
          <Refresh />
        </NavRight>
      </Nav>
    </Header>
    <Tabs>
      {['买入', '卖出', '撤单', '持仓', '查询'].map((t, i) => (
        <Tab key={t} $on={i === 3}>{t}</Tab>
      ))}
    </Tabs>
    <Account><Flag />人民币账户 A股</Account>
    <Metrics>
      <MetricKey>总资产<Eye color="#888" /></MetricKey>
      <MetricKey>浮动盈亏</MetricKey>
      <MetricKey $gap={11}>当日参考盈亏<InfoIcon /></MetricKey>
      <span /><span /><span />
      <MetricKey>总市值</MetricKey>
      <MetricKey>可用<MiniTag>国债<Chevron dir="right" size={12} w={7} color="#e0b04a" sw={1.4} /></MiniTag></MetricKey>
      <MetricKey>可取<MiniTag>转账<Chevron dir="right" size={12} w={7} color="#e0b04a" sw={1.4} /></MiniTag></MetricKey>
      <span />
      <MetricVal>484.17</MetricVal>
      <MetricVal>484.17</MetricVal>
    </Metrics>
    <Dots>
      <Dot $on /><Dot /><Dot />
    </Dots>
    <Band $h={16} />
    <ToggleRow>
      持仓分时
      <ToggleTrack><ToggleKnob /></ToggleTrack>
    </ToggleRow>
    <HoldGrid $h={51}>
      <HoldHead $left>市值<Sort active /></HoldHead>
      <HoldHead>盈亏<Sort /></HoldHead>
      <HoldHead>持仓/可用<Sort /></HoldHead>
      <HoldHead>成本/现价<Sort /><HoldArrow /></HoldHead>
    </HoldGrid>
    <HoldGrid $h={89}>
      <HoldCell $left><HoldName>智飞生物</HoldName></HoldCell>
      <span />
      <span />
      <HoldCell>
        <HoldLine>&nbsp;</HoldLine>
        <HoldLine>87.280</HoldLine>
      </HoldCell>
    </HoldGrid>
    {HOLDINGS.map(h => <Holding key={h.name} {...h} />)}
    <Actions>
      <Action>加仓</Action>
      <Action $blue>批量卖出</Action>
    </Actions>
    <Band $h={10} />
    <FilterRow>
      无持仓股过滤
      <ManageLink><Hex />管理</ManageLink>
    </FilterRow>
    <ClosedLink>
      查看已清仓股票
      <ChevSlot><Chevron dir="right" size={18} w={10} color="#ccc" sw={1.4} /></ChevSlot>
    </ClosedLink>
    <BottomNav>
      {NAVS.map(([label, icon, on]) => (
        <NavItem key={label} $on={on}>
          <NavIcon>{icon}</NavIcon>
          {label}
        </NavItem>
      ))}
    </BottomNav>
    <ScribbleLayer width="576" height="1280" viewBox="0 0 576 1280">
      {SCRIBBLES.map((p, i) => <polygon key={i} points={p} fill={SCRIBBLE} />)}
    </ScribbleLayer>
    <Watermark>股海明灯</Watermark>
  </Panel>
);

export default function App() {
  return (
    <Page>
      <Global />
      <StockPanel />
      <ClearedPanel />
      <TradePanel />
    </Page>
  );
}
